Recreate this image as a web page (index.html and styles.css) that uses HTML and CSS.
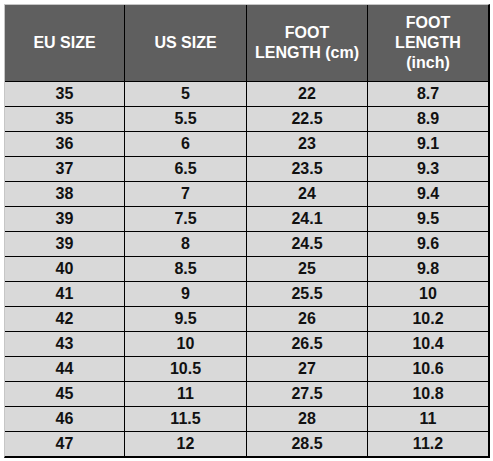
FILE: index.html
```html
<!DOCTYPE html>
<html>
<head>
<meta charset="utf-8">
<link rel="stylesheet" href="styles.css">
</head>
<body>
<div class="sheet">
  <div class="grid">
    <div class="hd">EU SIZE</div>
    <div class="hd">US SIZE</div>
    <div class="hd">FOOT<br>LENGTH (cm)</div>
    <div class="hd">FOOT<br>LENGTH<br>(inch)</div>

    <div class="c">35</div><div class="c">5</div><div class="c">22</div><div class="c">8.7</div>
    <div class="c">35</div><div class="c">5.5</div><div class="c">22.5</div><div class="c">8.9</div>
    <div class="c">36</div><div class="c">6</div><div class="c">23</div><div class="c">9.1</div>
    <div class="c">37</div><div class="c">6.5</div><div class="c">23.5</div><div class="c">9.3</div>
    <div class="c">38</div><div class="c">7</div><div class="c">24</div><div class="c">9.4</div>
    <div class="c">39</div><div class="c">7.5</div><div class="c">24.1</div><div class="c">9.5</div>
    <div class="c">39</div><div class="c">8</div><div class="c">24.5</div><div class="c">9.6</div>
    <div class="c">40</div><div class="c">8.5</div><div class="c">25</div><div class="c">9.8</div>
    <div class="c">41</div><div class="c">9</div><div class="c">25.5</div><div class="c">10</div>
    <div class="c">42</div><div class="c">9.5</div><div class="c">26</div><div class="c">10.2</div>
    <div class="c">43</div><div class="c">10</div><div class="c">26.5</div><div class="c">10.4</div>
    <div class="c">44</div><div class="c">10.5</div><div class="c">27</div><div class="c">10.6</div>
    <div class="c">45</div><div class="c">11</div><div class="c">27.5</div><div class="c">10.8</div>
    <div class="c">46</div><div class="c">11.5</div><div class="c">28</div><div class="c">11</div>
    <div class="c">47</div><div class="c">12</div><div class="c">28.5</div><div class="c">11.2</div>
  </div>
</div>
</body>
</html>
```

FILE: styles.css
```css
html, body {
  margin: 0;
  padding: 0;
  background: #ffffff;
}
body {
  width: 493px;
  height: 461px;
  overflow: hidden;
  font-family: "Liberation Sans", Arial, sans-serif;
}
.sheet {
  padding: 4px 0 0 4px;
}
.grid {
  display: grid;
  grid-template-columns: 119px 121px 120px 120px;
  grid-template-rows: 76px repeat(15, 24px);
  gap: 1px;
  width: max-content;
  background: #000000;
  border-left: 1px solid #c6c6c6;
  border-top: 1px solid #c6c6c6;
  border-right: 2px solid #000000;
  border-bottom: 2px solid #000000;
}
.hd {
  background: #5f5f5f;
  color: #ffffff;
  font-weight: bold;
  font-size: 16px;
  line-height: 20px;
  display: flex;
  align-items: center;
  justify-content: center;
  text-align: center;
}
.c {
  background: #d9d9d9;
  color: #111111;
  font-weight: bold;
  font-size: 16px;
  display: flex;
  align-items: center;
  justify-content: center;
}
```
